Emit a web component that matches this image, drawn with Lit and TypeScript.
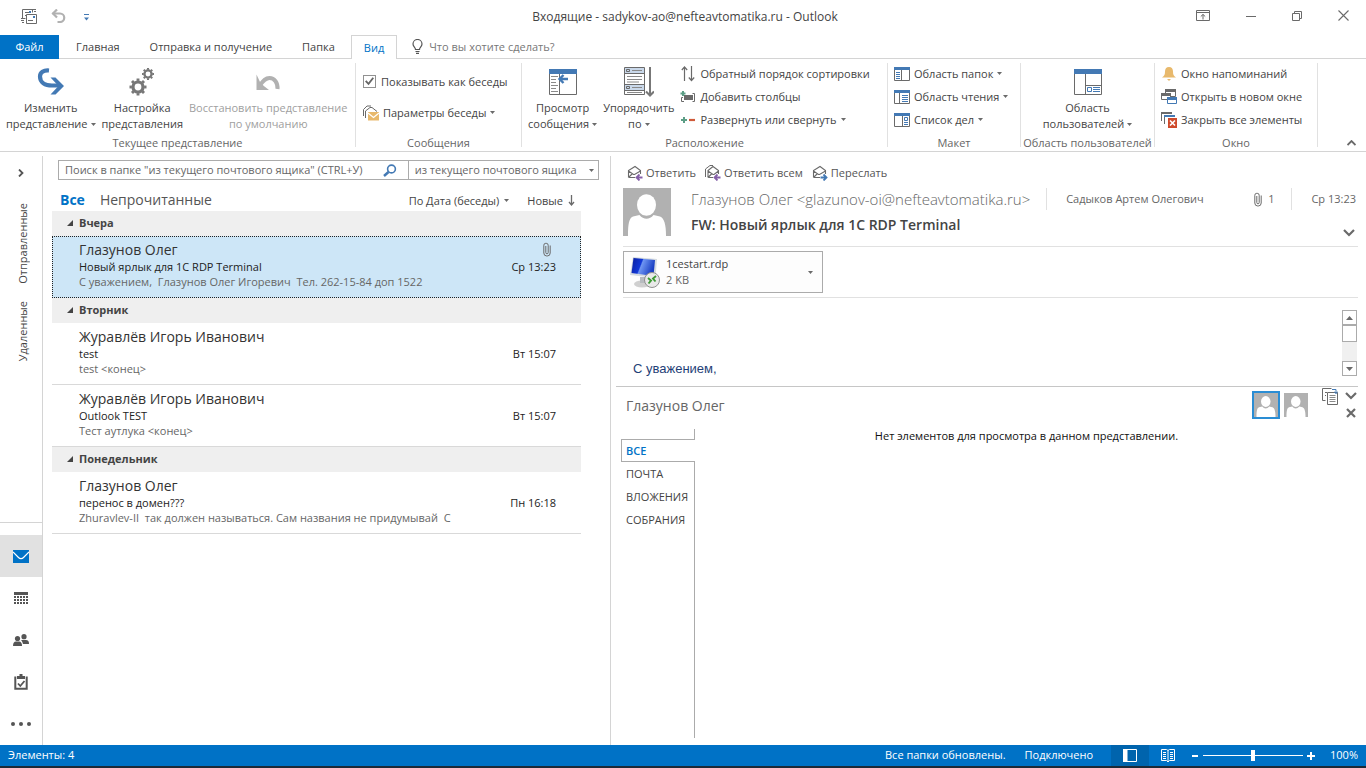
import { LitElement, html, css, svg, nothing, TemplateResult } from "lit";
import { customElement, state } from "lit/decorators.js";
import { classMap } from "lit/directives/class-map.js";

type Mail = { from: string; subject: string; preview: string; time: string; clip?: boolean };
type MailGroup = { day: string; mails: Mail[] };

const GROUPS: MailGroup[] = [
  {
    day: "Вчера",
    mails: [
      {
        from: "Глазунов Олег",
        subject: "Новый ярлык для 1С RDP Terminal",
        preview: "С уважением,  Глазунов Олег Игоревич  Тел. 262-15-84 доп 1522",
        time: "Ср 13:23",
        clip: true,
      },
    ],
  },
  {
    day: "Вторник",
    mails: [
      { from: "Журавлёв Игорь Иванович", subject: "test", preview: "test <конец>", time: "Вт 15:07" },
      { from: "Журавлёв Игорь Иванович", subject: "Outlook TEST", preview: "Тест аутлука <конец>", time: "Вт 15:07" },
    ],
  },
  {
    day: "Понедельник",
    mails: [
      {
        from: "Глазунов Олег",
        subject: "перенос в домен???",
        preview: "Zhuravlev-II  так должен называться. Сам названия не придумывай  С",
        time: "Пн 16:18",
      },
    ],
  },
];

const icon = (w: number, h: number, body: unknown) =>
  html`<svg width=${w} height=${h} viewBox="0 0 ${w} ${h}" fill="none" aria-hidden="true">${body}</svg>`;

const B = "#4379b4";
const G = "#6a6a6a";

const caret = icon(5, 3, svg`<path d="M0 0h5L2.5 3z" fill="#6a6a6a"/>`);
const chevronDown = icon(12, 8, svg`<path d="M1 1l5 5 5-5" stroke="#6a6a6a" stroke-width="2.2"/>`);
const clip = icon(8, 15, svg`<path d="M2.8 4v6.600a1.200 1.200 0 0 0 2.400 0V3.300a2 2 0 0 0-2-2h-.4a2 2 0 0 0-2 2V11a3 3 0 0 0 3 3h.4a3 3 0 0 0 3-3V3.500" stroke="#6a6a6a"/>`);

const sendReceive = icon(16, 16, svg`
  <path d="M1.500 10.500v-9h12M11.500 4.500V1M1.500 10.500h3" stroke=${G}/>
  <path d="M4 4.500h4M4 7.500h2" stroke=${G}/><path d="M8 3h2v2H8z" fill=${B}/>
  <path d="M13 1.500h2M13 3.500h2M0 10.500h3M0 12.500h3M1 14.500h2" stroke=${G}/>
  <path d="M5.500 6.500h10v9h-10zM7 12.500h5" stroke=${G} fill="#fff"/><path d="M12 8h2v2h-2z" fill=${B}/>`);
const undo = icon(15, 14, svg`<path d="M1.500 4.500H9a4.200 4.200 0 0 1 0 8.500H6.500" stroke="#b1b1b1" stroke-width="2.200"/><path d="M6 .5L2 4.500l4 4" stroke="#b1b1b1" stroke-width="2.200"/>`);
const qat = icon(5, 7, svg`<path d="M0 .5h5" stroke=${B}/><path d="M0 3.500h5L2.500 6.500z" fill=${B}/>`);

const ribbonOpts = icon(14, 11, svg`<path d="M.5.500h13v10H.5zM.5 2.500h13M7 9.500V4.500M4.800 6.500L7 4.400l2.200 2.100" stroke=${G}/>`);
const minimize = icon(10, 10, svg`<path d="M0 5.500h10" stroke=${G}/>`);
const restore = icon(10, 10, svg`<path d="M.5 2.500h7v7h-7zM2.500 2.500v-2h7v7h-2" stroke=${G}/>`);
const closeX = icon(11, 11, svg`<path d="M.5.500l10 10M10.500.500l-10 10" stroke=${G} stroke-width="1.100"/>`);
const bulb = icon(11, 15, svg`<path d="M3.500 10.500c0-2-2.500-2.800-2.500-5.500a4.500 4.500 0 0 1 9 0c0 2.700-2.500 3.500-2.500 5.500zM3.500 12.500h4M4 14.300h3" stroke="#555" stroke-width="1.200"/>`);

const changeView = icon(28, 28, svg`<path d="M12 2.500C6.500 2 3 4.500 3 8.500c0 6 5 9 12 9h7" stroke=${B} stroke-width="4.200"/><path d="M13.500 9.500h5l8.500 8.500-8.500 8.500h-5l8-8.500z" fill=${B}/>`);
const gearBody = (cx: number, cy: number, r: number, w: number) => svg`
  <g transform="translate(${cx} ${cy})">
    <circle r=${r} stroke="#777" stroke-width=${w}/>
    ${[0, 45, 90, 135, 180, 225, 270, 315].map(
      (a) => svg`<path transform="rotate(${a})" d="M0 ${-r - w / 2 + 0.5}v${-w * 0.75}" stroke="#777" stroke-width=${w * 0.9}/>`,
    )}
  </g>`;
const gears = icon(28, 30, svg`${gearBody(10, 20, 5, 3.2)}${gearBody(20, 7, 3.6, 2.3)}`);
const restoreView = icon(24, 18, svg`<path d="M21.500 16c.5-6-3-11-8-11C9.500 5 7.500 7.500 4 12" stroke="#b1b1b1" stroke-width="4"/><path d="M.5 1.500v15.500H13L8.500 13.500 4.500 10z" fill="#b1b1b1"/>`);
const messagePreview = icon(28, 26, svg`
  <path d="M.5.500h27v25H.5zM10.500 4v21" stroke=${G}/><path d="M0 0h28v5H0z" fill=${B}/>
  <path d="M2 7.500h7M2 10.500h5M2 13.500h5M2 16.500h7M2 19.500h5M2 22.500h7" stroke="#8a8a8a"/>
  <path d="M19 10H11.500M14.500 6L10.500 10l4 4" stroke=${B} stroke-width="2.400"/>`);
const arrange = icon(30, 30, svg`
  <path d="M.5.500h20v27H.5z" stroke=${G}/><path d="M1 1h19v5H1zM1 18h19v5H1z" fill="#c9d8ea"/>
  <path d="M.5 6.500h20M.5 17.500h20M.5 23.500h20" stroke=${G}/>
  <path d="M2.500 2.500h3v2h-3zM2.500 19.500h3v2h-3z" stroke=${G}/>
  <path d="M8 3.500h10M3 9.500h15M3 12.500h15M3 15h12M8 20.500h10M3 25.500h15" stroke="#8a8a8a"/>
  <path d="M26 0v28M22 24.500l4 4 4-4" stroke="#777" stroke-width="2"/>`);
const sortIcon = icon(14, 16, svg`<path d="M3.500 15V1M.8 4l2.700-3 2.700 3M10.500 0v14M7.800 11.500l2.700 3 2.700-3" stroke=${G} stroke-width="1.200"/>`);
const addCols = icon(16, 14, svg`<path d="M3 1v5M.5 3.500h5" stroke="#5c9e86" stroke-width="2"/><path d="M3 7.500H1.500v4H4M12.500 3.500h2v8h-2" stroke=${G}/><path d="M4 5h9v5H4z" fill=${G}/>`);
const expand = icon(14, 6, svg`<path d="M3 0v6M0 3h6" stroke="#5c9e86" stroke-width="2"/><path d="M8 3h6" stroke="#cf5a3a" stroke-width="2.200"/>`);
const folderPane = icon(16, 14, svg`<path d="M.5.500h15v13H.5zM7.500 2v11" stroke=${G}/><path d="M0 0h16v3H0z" fill=${B}/><path d="M2 5.500h4M2 7.500h4M2 9.500h4M2 11.500h4" stroke=${B}/>`);
const readPane = icon(16, 14, svg`<path d="M.5.500h15v13H.5zM5.500 2v11" stroke=${G}/><path d="M0 0h16v3H0z" fill=${B}/><path d="M8 5.500h6M8 7.500h6M8 9.500h6M8 11.500h6" stroke=${B}/>`);
const todoPane = icon(16, 14, svg`<path d="M.5.500h15v13H.5zM8.500 2v11" stroke=${G}/><path d="M0 0h16v3H0z" fill=${B}/><path d="M10.500 4.500h3v3h-3zM10 9.500h4M10 11.500h4" stroke=${B}/>`);
const peoplePane = icon(28, 26, svg`<path d="M.5.500h27v25H.5zM11.500 4v21M11.500 16.500h16" stroke=${G}/><path d="M0 0h28v5H0z" fill=${B}/><path d="M13.500 18.500h4v4h-4zM19 18.500h7M19 20.500h7M19 22.500h7" stroke=${B}/>`);
const bell = icon(14, 14, svg`<path d="M7 0c2.800 0 4 2 4 4.500 0 3 .5 4.500 3 6H0c2.500-1.500 3-3 3-6C3 2 4.200 0 7 0zM5 12h4l-2 2z" fill="#e8b96c"/>`);
const newWindow = icon(16, 15, svg`<path d="M4.500.500h10v7h-10z" stroke=${G} fill="#fff"/><path d="M4 0h11v3H4z" fill=${G}/><path d="M.5 4.500h9v6H.5z" stroke=${G} fill="#fff"/><path d="M0 4h10v3H0z" fill=${G}/><path d="M6.500 8.500h9v6h-9z" stroke=${B} fill="#fff"/><path d="M6 8h10v3H6z" fill=${B}/>`);
const closeAll = icon(16, 16, svg`<path d="M.5 9V.500h9M3.500 12V3.500h9" stroke=${G}/><path d="M0 0h11v2H0z" fill=${G}/><path d="M3 3h11v2H3z" fill=${B}/><path d="M7 6h9v10H7z" fill="#cf4a2b"/><path d="M9 8.500l5 5M14 8.500l-5 5" stroke="#fff" stroke-width="1.600"/>`);
const convIcon = icon(16, 16, svg`<path d="M.5 11V4.500L4 1h4M2.500 13V6L7 2.500h2L14 6.500" stroke=${G}/><path d="M5 7h11v8.500H5z" fill="#e8b96c"/><path d="M5 8l5.500 4.500L16 8" stroke="#fff" stroke-width="1.200"/>`);

const envelope = (arrow: unknown, all = false) => icon(16, 16, svg`
  ${all ? svg`<path d="M.5 12V4L5 .5h3" stroke=${G}/>` : nothing}
  <path d="M${all ? 3 : 1.5} 12.500V5.500L8 1.500l5.500 4V9M${all ? 3 : 1.5} 12.500H8M${all ? 3 : 1.5} 6l5 3.500h1L13.500 6M${all ? 3 : 1.5} 12.500l4-4" stroke=${G} stroke-width="1.100"/>${arrow}`);
const backArrow = svg`<path d="M15.500 12.500H10M12.500 9.500l-3 3 3 3" stroke="#8560a8" stroke-width="1.800"/>`;
const fwdArrow = svg`<path d="M8.500 12.500H14M11.500 9.500l3 3-3 3" stroke=${B} stroke-width="1.800"/>`;

const magnifier = icon(14, 13, svg`<circle cx="8.500" cy="5" r="3.900" stroke=${B} stroke-width="1.600"/><path d="M5.500 8L1 12" stroke=${B} stroke-width="2.400"/>`);
const sortDown = icon(7, 11, svg`<path d="M3.500 0v9.500M1 7l2.500 3L6 7" stroke=${G} stroke-width="1.300"/>`);
const groupMark = icon(6, 6, svg`<path d="M6 0v6H0z" fill="#444"/>`);

const mailIcon = icon(16, 13, svg`<path d="M0 0h16v13H0z" fill="#0072c6"/><path d="M0 2l5.500 5.500a3.500 3.500 0 0 0 5 0L16 2" stroke="#fff" stroke-width="1.200"/>`);
const calIcon = icon(14, 12, svg`<path d="M0 0h14v3H0z" fill="#555"/><path d="M0 5h14M0 8h14M0 11h14" stroke="#555" stroke-width="2" stroke-dasharray="2 1"/>`);
const peopleIcon = icon(16, 12, svg`<circle cx="4.500" cy="4.500" r="2.600" fill="#555"/><path d="M0 12c0-3 1-4.500 3-4.500h3C8 7.500 9 9 9 12z" fill="#555"/><circle cx="11" cy="2.700" r="2.600" fill="#555"/><path d="M8 6h5c2 0 3 1 3 4h-6C9.500 8 9 7 8 6z" fill="#555"/>`);
const taskIcon = icon(14, 16, svg`<path d="M1.300 2.500v12.200h11.400V2.500" stroke="#555" stroke-width="2"/><path d="M3 2h8v3H3zM5.500 0h3v2h-3z" fill="#555"/><path d="M4 9.500l2.300 2.500L10.500 7" stroke="#555" stroke-width="1.800"/>`);
const dotsIcon = icon(20, 4, svg`<circle cx="2" cy="2" r="2" fill="#555"/><circle cx="10" cy="2" r="2" fill="#555"/><circle cx="18" cy="2" r="2" fill="#555"/>`);

const person = (size: number) => html`<svg width=${size} height=${size} viewBox="0 0 48 48" aria-hidden="true">
  <path d="M0 0h48v48H0z" fill="#b1b1b1"/>
  <ellipse cx="23.500" cy="17" rx="9.500" ry="10.800" fill="#fff"/>
  <path d="M5 48c0-12 1-18 5-19.500l6.500-1.500c4 5 10 5 14 0l6.500 1.500c4 1.500 6 7.500 6 19.500z" fill="#fff"/></svg>`;

const rdpIcon = html`<svg width="32" height="32" viewBox="0 0 32 32" aria-hidden="true">
  <defs><linearGradient id="scr" x1="0" y1="0" x2="1" y2="0.300"><stop offset="0" stop-color="#0a1f9c"/><stop offset=".45" stop-color="#1238d8"/><stop offset=".5" stop-color="#6f96f2"/><stop offset="1" stop-color="#1a3fc4"/></linearGradient></defs>
  <ellipse cx="13" cy="28" rx="8" ry="3.500" fill="#cfcfcf"/><path d="M11 21h6l1 6h-7z" fill="#b8bcc0"/>
  <path d="M4 1l24 2-1.500 19L1 19z" fill="#d5dbe0"/><path d="M4.500 2l21.500 2-1.500 16L2.500 17z" fill="url(#scr)"/>
  <circle cx="23" cy="24" r="7.500" fill="#e9e9e9" stroke="#909090"/>
  <path d="M19 22l3 2.500-2.500 3M27 20l-3 2.500 2.500 3" fill="none" stroke="#3d9a34" stroke-width="1.900"/></svg>`;

const popOut = icon(16, 17, svg`<path d="M3.500 12.500h-3V.500h9M3 4.500h2M3 7.500h1" stroke=${G}/><path d="M5.500 4.500h10v12h-10z" fill="#fff" stroke=${G}/><path d="M7.500 7.500h6M7.500 9.500h6M7.500 11.500h6M7.500 13.500h6" stroke="#8a8a8a"/><path d="M10 1.500h4v4M12 3.800l2 1.700 1.800-1.700" stroke=${B}/>`);
const boldX = icon(10, 10, svg`<path d="M1 1l8 8M9 1l-8 8" stroke="#6a6a6a" stroke-width="2.200"/>`);
const viewNormal = icon(14, 13, svg`<path d="M.5.500h13v12H.5z" stroke="#fff"/><path d="M0 0h4.500v13H0z" fill="#fff"/>`);
const viewRead = icon(14, 13, svg`<path d="M7 1.500L5.500.500H.5v11h5L7 13l1.500-1.500h5V.500h-5L7 1.500V12" stroke="#fff"/><path d="M2 3.500h3M2 5.500h3M2 7.500h3M2 9.500h3M9 3.500h3M9 5.500h3M9 7.500h3M9 9.500h3" stroke="#fff"/>`);

@customElement("app-root")
export class AppRoot extends LitElement {
  @state() private selected = "0-0";

  static styles = css`
    :host { display: flex; flex-direction: column; height: 100vh; overflow: hidden; background: #fff; color: #444;
      font: 11px/16px "Open Sans", "Noto Sans", sans-serif; }
    * { box-sizing: border-box; }
    svg { display: block; flex: none; }
    button, input, select { font: inherit; color: inherit; background: none; border: 0; padding: 0; margin: 0; border-radius: 0; outline: 0; }
    button { display: flex; align-items: center; white-space: nowrap; }
    a { color: inherit; text-decoration: none; }
    h1, h2, h3, p { margin: 0; font-size: inherit; font-weight: inherit; }

    .title { display: grid; grid-template-columns: 1fr auto 1fr; align-items: center; height: 35px; flex: none; padding: 0 17px 4px 21px; }
    .title h1 { font-size: 12px; padding-top: 3px; }
    .quick { display: flex; align-items: center; gap: 14px; }
    .quick .more { margin: 4px 0 0 4px; }
    .window { display: flex; justify-content: flex-end; align-items: center; gap: 36px; }

    .tabs { display: flex; height: 24px; flex: none; border-bottom: 1px solid #d4d4d4; }
    .tab { padding: 0 15px; }
    .tab.file { background: #0072c6; color: #fff; width: 59px; padding: 0; justify-content: center; height: 24px; margin-right: 2px; }
    .tab.on { color: #0072c6; border: 1px solid #d4d4d4; border-bottom: 0; background: #fff; height: 24px; padding: 0 12px; margin-left: 1px; }
    .tell { display: flex; align-items: center; gap: 6px; margin-left: 15px; }
    .tell input { width: 200px; }
    .tell input::placeholder { color: #777; opacity: 1; }

    .ribbon { display: flex; height: 93px; flex: none; border-bottom: 1px solid #d4d4d4; padding-top: 4px; }
    .rgroup { display: flex; flex-direction: column; border-right: 1px solid #e1e1e1; height: 84px; flex: none; }
    .g1 { width: 356px; } .g2 { width: 166px; } .g3 { width: 366px; } .g4 { width: 133px; } .g5 { width: 134px; } .g6 { width: 163px; }
    .rbody { display: flex; flex: 1; padding: 0 6px; }
    .g2 .rbody { padding-left: 7px; }
    .g5 .rbody { justify-content: center; }
    .rlabel { display: flex; align-items: center; justify-content: center; height: 12px; margin-bottom: -1px; color: #666; line-height: 15px; white-space: nowrap; }
    .big { flex-direction: column; align-items: center; justify-content: flex-start; }
    .big .pic { height: 37px; display: flex; align-items: center; }
    .big .line { display: flex; align-items: center; gap: 3px; }
    .big:disabled { color: #a0a0a0; }
    .big + .big { margin-left: 6px; }
    .small { display: flex; flex-direction: column; margin-top: -1px; }
    .small button { height: 23px; gap: 4px; }
    .small .pic { width: 16px; display: flex; justify-content: center; }
    .g3 .small { margin-left: 6px; }
    .conv { display: flex; flex-direction: column; padding-top: 3px; }
    .check, .conv button { height: 31px; display: flex; align-items: center; gap: 4px; white-space: nowrap; }
    .check { gap: 5px; }
    .check input { appearance: none; width: 13px; height: 13px; border: 1px solid #919191; display: grid; place-items: center; }
    .check input:checked::before { content: ""; width: 9px; height: 9px; background: #666; clip-path: polygon(0 50%, 16% 36%, 38% 62%, 84% 4%, 100% 14%, 40% 92%); }
    .fold { margin: auto 10px 5px auto; }

    .main { flex: 1; min-height: 0; display: grid; grid-template-columns: 43px minmax(0, 568fr) minmax(0, 755fr); }

    .nav { display: flex; flex-direction: column; border-right: 1px solid #d4d4d4; margin-top: 4px; }
    .nav .open { height: 33px; justify-content: center; }
    .folders { flex: 1; display: flex; flex-direction: column; align-items: center; gap: 17px; padding-top: 14px; border-bottom: 1px solid #d4d4d4; margin-bottom: 12px; }
    .folders a { writing-mode: vertical-rl; transform: rotate(180deg); margin-left: 3px; }
    .nav .mod { height: 42px; justify-content: center; flex: none; }
    .nav .mod.on { background: #e1e1e1; }

    .list { border-right: 1px solid #d4d4d4; padding: 4px 11px 0 9px; margin-top: 4px; display: flex; flex-direction: column; }
    .search { display: grid; grid-template-columns: minmax(0, 350fr) minmax(0, 191fr); height: 20px; border: 1px solid #ababab; margin-left: 6px; color: #666; flex: none; }
    .search .box { display: flex; align-items: center; padding: 0 11px 0 6px; min-width: 0; }
    .search input { flex: 1; min-width: 0; }
    .search input::placeholder { color: #666; opacity: 1; }
    .scope { display: grid; align-items: center; border-left: 1px solid #ababab; min-width: 0; }
    .scope select, .scope svg { grid-area: 1 / 1; }
    .scope select { appearance: none; padding-left: 6px; width: 100%; }
    .scope svg { justify-self: end; margin-right: 4px; pointer-events: none; }
    .filters { display: flex; align-items: center; height: 31px; padding: 8px 6px 0 8px; flex: none; font-size: 14px; margin-right: 18px; color: #555; }
    .filters .on { color: #0072c6; font-weight: 700; margin-right: 15px; }
    .filters .sort { font-size: 11px; gap: 5px; color: #444; padding-top: 2px; }
    .filters .by { margin-left: auto; margin-right: 18px; }
    .day { display: flex; align-items: center; gap: 6px; height: 25px; background: #efefef; padding: 0 0 2px 15px; font-weight: 700; width: 100%; }
    .mails { margin-right: 18px; }
    .mail { display: grid; grid-template-columns: minmax(0, 1fr) auto; grid-template-rows: 19px 15px 15px; width: 100%; height: 62px; text-align: left; padding: 4px 25px 0 27px; border-bottom: 1px solid #d9d9d9; align-content: start; line-height: 15px; white-space: pre; }
    .mail.on { background: #cde6f7; border: 1px dotted #222; padding: 3px 24px 0 26px; }
    .mail .from { font-size: 14px; line-height: 20px; color: #333; }
    .mail .clip { justify-self: end; margin-right: 5px; }
    .mail .subject, .mail .time { color: #222; }
    .mail .preview { grid-column: 1 / 3; color: #666; }

    .read { display: flex; flex-direction: column; padding: 0 8px 0 5px; min-width: 0; }
    .actions { display: flex; gap: 9px; height: 36px; padding: 5px 0 0 11px; color: #555; flex: none; }
    .actions button { gap: 3px; }
    .head { display: flex; gap: 20px; margin-left: 7px; height: 59px; border-bottom: 1px solid #e1e1e1; flex: none; }
    .meta { flex: 1; min-width: 0; }
    .row { display: flex; align-items: center; height: 22px; color: #666; white-space: nowrap; }
    .row .sender { font-size: 15px; color: #666; font-weight: 300; margin-right: auto; }
    .row .to { border-left: 1px solid #e1e1e1; padding-left: 19px; width: 208px; line-height: 22px; }
    .row .att { display: flex; align-items: center; gap: 6px; padding-right: 17px; line-height: 22px; border-right: 1px solid #e1e1e1; }
    .row .when { padding-left: 19px; padding-right: 2px; }
    .subj { display: flex; justify-content: space-between; align-items: center; height: 30px; font-size: 14px; font-weight: 600; }
    .subj button { margin: 15px 3px 0 0; }
    .attach { margin: 0 0 0 7px; height: 51px; border-bottom: 1px solid #e1e1e1; padding-top: 4px; flex: none; }
    .file-card { display: flex; align-items: center; width: 200px; height: 42px; border: 1px solid #ababab; background: #fdfdfd; padding: 0 9px 0 5px; gap: 5px; text-align: left; line-height: 16px; }
    .file-card .names { flex: 1; }
    .file-card .size { display: block; color: #666; }
    .body { display: flex; justify-content: space-between; align-items: flex-end; height: 89px; padding: 0 1px 10px 17px; flex: none; border-bottom: 1px solid #c6c6c6; font: 13px/14px "Liberation Sans", Arial, sans-serif; color: #1f3f77; }
    .scroll { display: flex; flex-direction: column; width: 15px; height: 66px; background: #f0f0f0; }
    .scroll button { height: 15px; border: 1px solid #ababab; justify-content: center; background: #fff; }
    .scroll .thumb { height: 17px; border: 1px solid #ababab; background: #fff; }
    .scroll .down { margin-top: auto; }

    .who { display: flex; height: 42px; padding: 4px 0 0 10px; flex: none; }
    .who h2 { font-size: 14px; line-height: 30px; color: #666; flex: 1; }
    .who .faces { display: flex; align-items: center; gap: 4px; height: 28px; margin-right: 14px; }
    .who .face.on { border: 2px solid #2a8dd4; }
    .who .pop { align-self: flex-start; margin-right: 7px; margin-top: -3px; }
    .who .ctl { display: flex; flex-direction: column; gap: 8px; align-items: center; padding: 1px 1px 0 0; }
    .people { flex: 1; display: flex; min-height: 0; padding: 0 0 7px 5px; }
    .ptabs { display: flex; flex-direction: column; width: 74px; }
    .ptabs::before { content: ""; height: 10px; border-right: 1px solid #ababab; }
    .ptabs::after { content: ""; flex: 1; border-right: 1px solid #ababab; }
    .ptabs button { height: 23px; padding-left: 5px; border-right: 1px solid #ababab; }
    .ptabs button.on { border: 1px solid #ababab; border-right: 0; padding-left: 4px; color: #0072c6; font-weight: 600; }
    .empty { flex: 1; text-align: center; color: #111; line-height: 14px; }

    .status { display: flex; align-items: center; height: 23px; flex: none; background: #0072c6; border-bottom: 2px solid #1c2a38; color: #fff; padding: 0 8px; white-space: nowrap; line-height: 15px; }
    .status > span { padding-bottom: 2px; }
    .status .count { margin-right: auto; }
    .status .conn { margin: 0 18px 0 19px; }
    .status .view { width: 38px; height: 21px; justify-content: center; }
    .status .view.on { background: #0064ad; }
    .status .zoom { display: flex; align-items: center; gap: 4px; margin: 0 15px 0 4px; }
    .zoom input { appearance: none; width: 100px; height: 11px; background: linear-gradient(#fff, #fff) center / 100% 1px no-repeat; }
    .zoom input::-webkit-slider-thumb { appearance: none; width: 4px; height: 11px; background: #fff; }
  `;

  private big(pic: unknown, a: string, b: string, menu = false, disabled = false) {
    return html`<button class="big" ?disabled=${disabled}>
      <span class="pic">${pic}</span><span>${a}</span><span class="line">${b}${menu ? caret : nothing}</span>
    </button>`;
  }

  private small(pic: unknown, text: string, menu = false) {
    return html`<button><span class="pic">${pic}</span>${text}${menu ? caret : nothing}</button>`;
  }

  private group(cls: string, label: string, body: TemplateResult) {
    return html`<section class="rgroup ${cls}"><div class="rbody">${body}</div><h2 class="rlabel">${label}</h2></section>`;
  }

  private ribbon() {
    return html`<div class="ribbon">
      ${this.group("g1", "Текущее представление", html`
        ${this.big(changeView, "Изменить", "представление", true)}
        ${this.big(gears, "Настройка", "представления")}
        ${this.big(restoreView, "Восстановить представление", "по умолчанию", false, true)}`)}
      ${this.group("g2", "Сообщения", html`<div class="conv">
        <label class="check"><input type="checkbox" checked />Показывать как беседы</label>
        <button>${convIcon}Параметры беседы${caret}</button></div>`)}
      ${this.group("g3", "Расположение", html`
        ${this.big(messagePreview, "Просмотр", "сообщения", true)}
        ${this.big(arrange, "Упорядочить", "по", true)}
        <div class="small">
          ${this.small(sortIcon, "Обратный порядок сортировки")}
          ${this.small(addCols, "Добавить столбцы")}
          ${this.small(expand, "Развернуть или свернуть", true)}
        </div>`)}
      ${this.group("g4", "Макет", html`<div class="small">
          ${this.small(folderPane, "Область папок", true)}
          ${this.small(readPane, "Область чтения", true)}
          ${this.small(todoPane, "Список дел", true)}
        </div>`)}
      ${this.group("g5", "Область пользователей", this.big(peoplePane, "Область", "пользователей", true))}
      ${this.group("g6", "Окно", html`<div class="small">
          ${this.small(bell, "Окно напоминаний")}
          ${this.small(newWindow, "Открыть в новом окне")}
          ${this.small(closeAll, "Закрыть все элементы")}
        </div>`)}
      <button class="fold" aria-label="Свернуть ленту">${icon(9, 6, svg`<path d="M.5 5l4-4 4 4" stroke="#6a6a6a" stroke-width="1.800"/>`)}</button>
    </div>`;
  }

  private mail(m: Mail, key: string) {
    return html`<button class=${classMap({ mail: true, on: this.selected === key })} @click=${() => (this.selected = key)}><span class="from">${m.from}</span><span class="clip">${m.clip ? clip : nothing}</span><span class="subject">${m.subject}</span><span class="time">${m.time}</span><span class="preview">${m.preview}</span></button>`;
  }

  private list() {
    return html`<section class="list">
      <div class="search">
        <div class="box"><input type="text" aria-label="Поиск" placeholder='Поиск в папке "из текущего почтового ящика" (CTRL+У)' /><button aria-label="Найти">${magnifier}</button></div>
        <div class="scope"><select aria-label="Область поиска"><option>из текущего почтового ящика</option></select>${caret}</div>
      </div>
      <div class="filters">
        <button class="on">Все</button><button>Непрочитанные</button>
        <button class="sort by">По Дата (беседы)${caret}</button>
        <button class="sort">Новые${sortDown}</button>
      </div>
      <div class="mails">
        ${GROUPS.map((g, i) => html`<button class="day">${groupMark}${g.day}</button>${g.mails.map((m, j) => this.mail(m, `${i}-${j}`))}`)}
      </div>
    </section>`;
  }

  private reading() {
    return html`<section class="read">
      <div class="actions">
        <button>${envelope(backArrow)}Ответить</button>
        <button>${envelope(backArrow, true)}Ответить всем</button>
        <button>${envelope(fwdArrow)}Переслать</button>
      </div>
      <header class="head">
        ${person(48)}
        <div class="meta">
          <div class="row">
            <span class="sender">Глазунов Олег &lt;glazunov-oi@nefteavtomatika.ru&gt;</span>
            <span class="to">Садыков Артем Олегович</span>
            <span class="att">${clip}1</span><span class="when">Ср 13:23</span>
          </div>
          <div class="subj"><h2>FW: Новый ярлык для 1С RDP Terminal</h2><button aria-label="Развернуть">${chevronDown}</button></div>
        </div>
      </header>
      <div class="attach"><button class="file-card">${rdpIcon}<span class="names">1cestart.rdp<span class="size">2 KB</span></span>${caret}</button></div>
      <div class="body">
        <p>С уважением,</p>
        <div class="scroll">
          <button aria-label="Вверх">${icon(7, 4, svg`<path d="M0 4h7L3.500 0z" fill="#6a6a6a"/>`)}</button>
          <div class="thumb"></div>
          <button class="down" aria-label="Вниз">${icon(7, 4, svg`<path d="M0 0h7L3.500 4z" fill="#6a6a6a"/>`)}</button>
        </div>
      </div>
      <div class="who">
        <h2>Глазунов Олег</h2>
        <div class="faces"><button class="face on" aria-label="Глазунов Олег">${person(24)}</button><button class="face" aria-label="Садыков Артем">${person(24)}</button></div>
        <button class="pop" aria-label="Область пользователей">${popOut}</button>
        <div class="ctl"><button aria-label="Свернуть">${chevronDown}</button><button aria-label="Закрыть">${boldX}</button></div>
      </div>
      <div class="people">
        <nav class="ptabs"><button class="on">ВСЕ</button><button>ПОЧТА</button><button>ВЛОЖЕНИЯ</button><button>СОБРАНИЯ</button></nav>
        <p class="empty">Нет элементов для просмотра в данном представлении.</p>
      </div>
    </section>`;
  }

  render() {
    return html`
      <header class="title">
        <div class="quick">
          <button aria-label="Отправить и получить">${sendReceive}</button>
          <button aria-label="Отменить">${undo}</button>
          <button class="more" aria-label="Настройка панели">${qat}</button>
        </div>
        <h1>Входящие - sadykov-ao@nefteavtomatika.ru - Outlook</h1>
        <div class="window">
          <button aria-label="Параметры ленты">${ribbonOpts}</button>
          <button aria-label="Свернуть">${minimize}</button>
          <button aria-label="Восстановить">${restore}</button>
          <button aria-label="Закрыть">${closeX}</button>
        </div>
      </header>
      <nav class="tabs">
        <button class="tab file">Файл</button><button class="tab">Главная</button>
        <button class="tab">Отправка и получение</button><button class="tab">Папка</button>
        <button class="tab on">Вид</button>
        <label class="tell">${bulb}<input type="text" placeholder="Что вы хотите сделать?" /></label>
      </nav>
      ${this.ribbon()}
      <main class="main">
        <nav class="nav">
          <button class="open" aria-label="Развернуть область папок">${icon(6, 8, svg`<path d="M1 .5L4.500 4 1 7.500" stroke="#555" stroke-width="1.800"/>`)}</button>
          <div class="folders"><a href="#sent">Отправленные</a><a href="#deleted">Удаленные</a></div>
          <button class="mod on" aria-label="Почта">${mailIcon}</button>
          <button class="mod" aria-label="Календарь">${calIcon}</button>
          <button class="mod" aria-label="Люди">${peopleIcon}</button>
          <button class="mod" aria-label="Задачи">${taskIcon}</button>
          <button class="mod" aria-label="Ещё">${dotsIcon}</button>
        </nav>
        ${this.list()} ${this.reading()}
      </main>
      <footer class="status">
        <span class="count">Элементы: 4</span><span>Все папки обновлены.</span><span class="conn">Подключено</span>
        <button class="view on" aria-label="Обычный">${viewNormal}</button>
        <button class="view" aria-label="Чтение">${viewRead}</button>
        <div class="zoom">
          <button aria-label="Уменьшить">${icon(8, 8, svg`<path d="M1 4h6" stroke="#fff" stroke-width="2"/>`)}</button>
          <input type="range" min="0" max="100" value="50" aria-label="Масштаб" />
          <button aria-label="Увеличить">${icon(8, 8, svg`<path d="M0 4h8M4 0v8" stroke="#fff" stroke-width="2"/>`)}</button>
        </div>
        <span>100%</span>
      </footer>`;
  }
}
